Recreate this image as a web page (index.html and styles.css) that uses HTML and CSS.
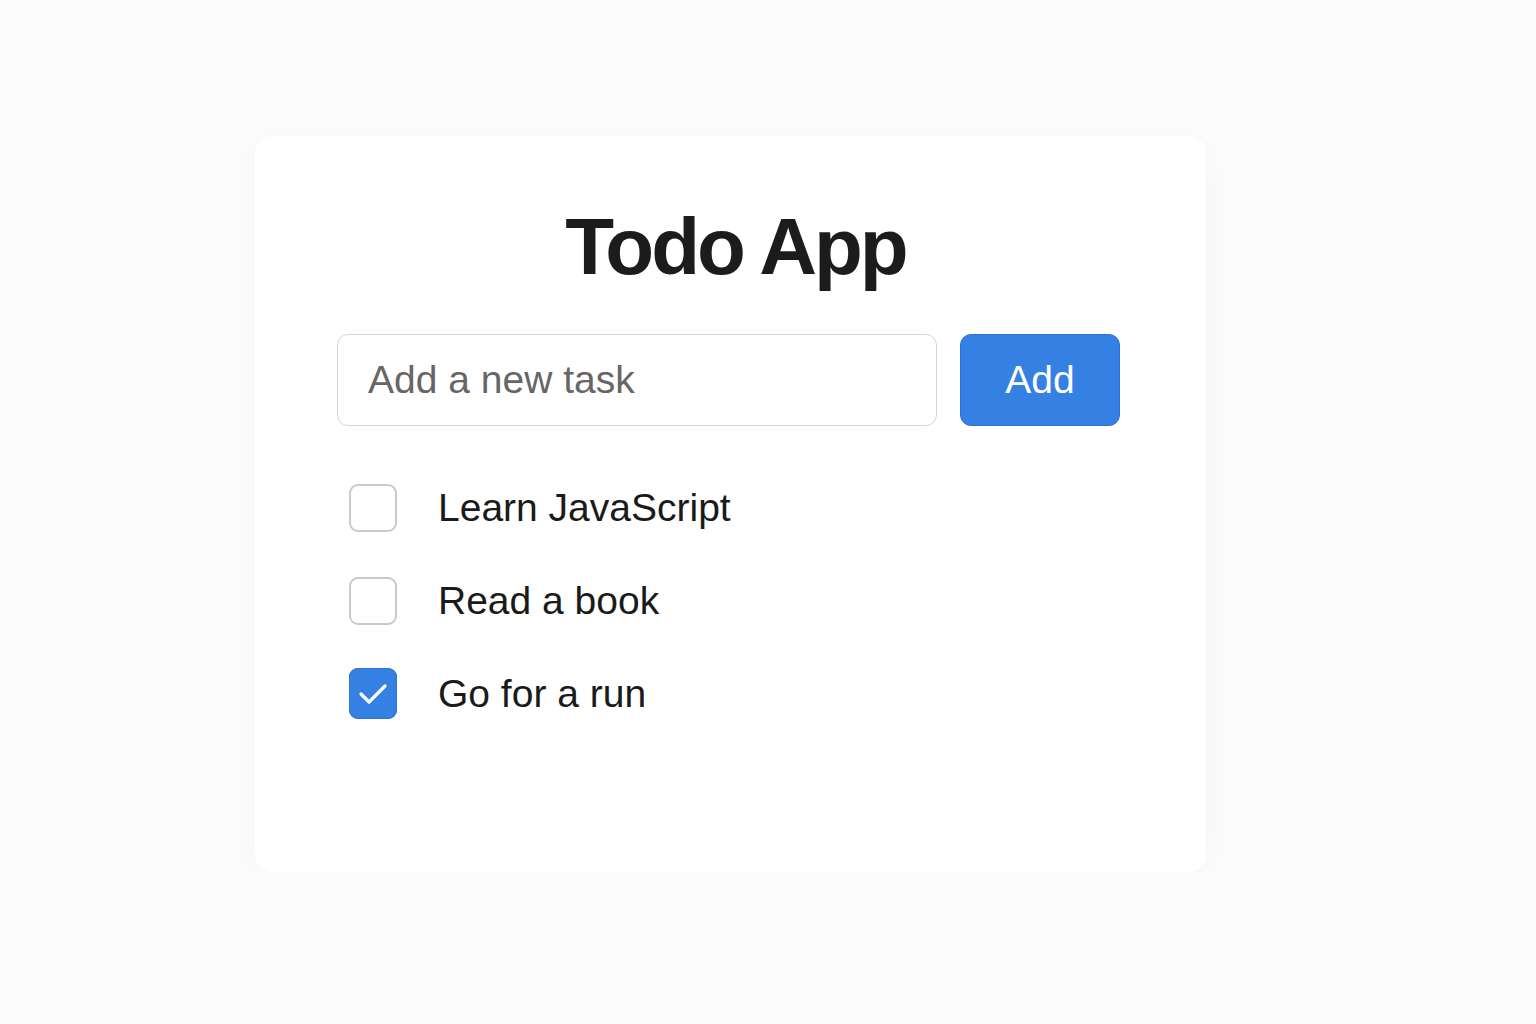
FILE: index.html
```html
<!DOCTYPE html>
<html lang="en">
<head>
    <meta charset="UTF-8">
    <meta name="viewport" content="width=device-width, initial-scale=1.0">
    <title>Todo App</title>
    <link rel="stylesheet" href="styles.css">
</head>
<body>
    <div class="todo-card">
        <h1>Todo App</h1>
        <form class="add-form">
            <input type="text" class="task-input" placeholder="Add a new task">
            <button type="button" class="add-btn">Add</button>
        </form>
        <ul class="task-list">
            <li class="task">
                <span class="check"></span>
                <span class="task-text">Learn JavaScript</span>
            </li>
            <li class="task">
                <span class="check"></span>
                <span class="task-text">Read a book</span>
            </li>
            <li class="task">
                <span class="check checked">
                    <svg width="48" height="51" viewBox="0 0 48 51">
                        <path d="M12 26 L20 34 L36 18" fill="none" stroke="#fff" stroke-width="3.2" stroke-linecap="round" stroke-linejoin="round"/>
                    </svg>
                </span>
                <span class="task-text">Go for a run</span>
            </li>
        </ul>
    </div>
</body>
</html>
```

FILE: styles.css
```css
body {
    font-family: "Liberation Sans", Arial, sans-serif;
    margin: 0;
    background-color: #fcfcfc;
    color: #1d1d1d;
}

.todo-card {
    width: 951px;
    height: 736px;
    box-sizing: border-box;
    margin: 136px 0 0 255px;
    padding: 54px 86px 0 82px;
    background-color: #fff;
    border-radius: 18px;
    box-shadow: 0 6px 40px rgba(0, 0, 0, 0.035);
}

h1 {
    margin: 0 0 30px;
    text-align: center;
    font-size: 80px;
    line-height: 114px;
    font-weight: 700;
    letter-spacing: -3px;
    color: #1c1c1c;
    padding-left: 14px;
}

.add-form {
    display: flex;
    gap: 23px;
}

.task-input {
    width: 600px;
    height: 92px;
    box-sizing: border-box;
    padding: 0 30px;
    border: 1.5px solid #d6d6d6;
    border-radius: 11px;
    font-family: inherit;
    font-size: 39px;
    color: #333;
    outline: none;
}

.task-input::placeholder {
    color: #666;
}

.add-btn {
    width: 160px;
    height: 92px;
    border: 1.5px solid #2a6fd8;
    border-radius: 11px;
    background-color: #3580e3;
    color: #fff;
    font-family: inherit;
    font-size: 39px;
    cursor: pointer;
}

.task-list {
    list-style: none;
    margin: 35px 0 0;
    padding: 0 0 0 12px;
}

.task {
    display: flex;
    align-items: center;
    gap: 41px;
    height: 93px;
}

.check {
    width: 48px;
    height: 48px;
    box-sizing: border-box;
    border: 2px solid #c9c9c9;
    border-radius: 9px;
    flex-shrink: 0;
}

.check.checked {
    height: 51px;
    border: none;
    background-color: #3580e3;
    box-shadow: inset 0 0 0 1px #2f74d8;
}

.check svg {
    display: block;
}

.task-text {
    font-size: 39px;
    color: #1a1a1a;
}
```
